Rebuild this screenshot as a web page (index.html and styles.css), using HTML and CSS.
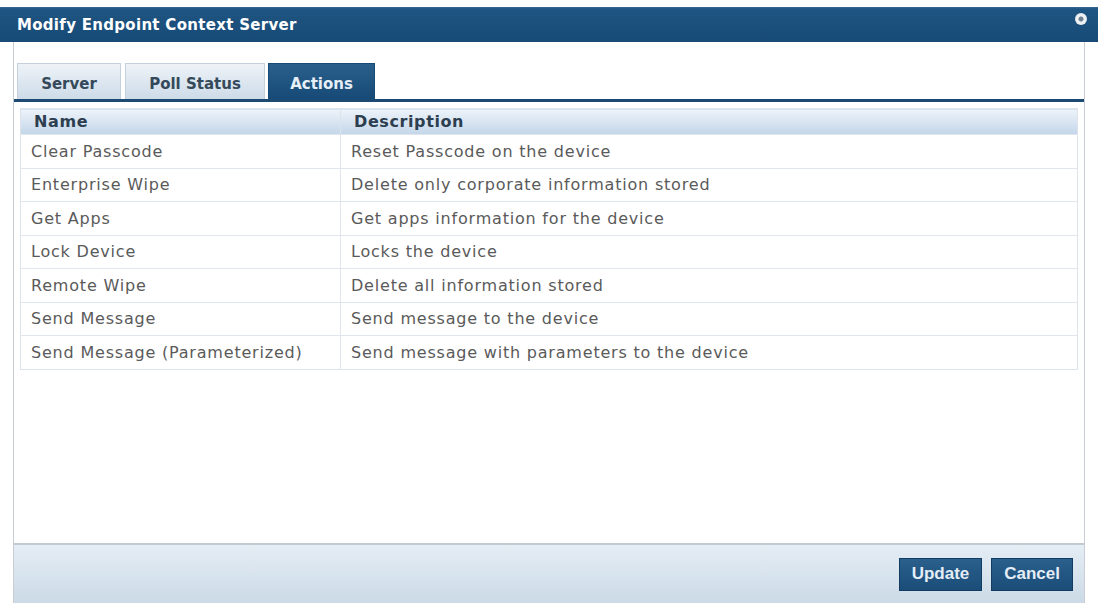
FILE: index.html
```html
<!DOCTYPE html>
<html lang="en">
<head>
  <meta charset="UTF-8" />
  <title>Modify Endpoint Context Server</title>
  <link rel="stylesheet" href="styles.css">
</head>
<body>

<div class="dialog">
  <!-- Barre de titre -->
  <div class="titlebar">
    <span class="title">Modify Endpoint Context Server</span>
    <span class="close-btn"></span>
  </div>

  <div class="content">
    <!-- Onglets -->
    <div class="tabs">
      <div class="tab tab-server">Server</div>
      <div class="tab tab-poll">Poll Status</div>
      <div class="tab tab-actions active">Actions</div>
    </div>

    <div class="panel">
      <table class="actions-table">
        <thead>
          <tr>
            <th class="col-name">Name</th>
            <th>Description</th>
          </tr>
        </thead>
        <tbody>
          <tr><td>Clear Passcode</td><td>Reset Passcode on the device</td></tr>
          <tr><td>Enterprise Wipe</td><td>Delete only corporate information stored</td></tr>
          <tr><td>Get Apps</td><td>Get apps information for the device</td></tr>
          <tr><td>Lock Device</td><td>Locks the device</td></tr>
          <tr><td>Remote Wipe</td><td>Delete all information stored</td></tr>
          <tr><td>Send Message</td><td>Send message to the device</td></tr>
          <tr><td>Send Message (Parameterized)</td><td>Send message with parameters to the device</td></tr>
        </tbody>
      </table>
    </div>

    <!-- Pied de page -->
    <div class="footer">
      <button class="btn">Update</button>
      <button class="btn">Cancel</button>
    </div>
  </div>
</div>

</body>
</html>
```

FILE: styles.css
```css
/* Styles de base */
body {
  margin: 0;
  background: #ffffff;
  font-family: 'DejaVu Sans', Verdana, sans-serif;
  color: #555;
}

.dialog {
  padding-top: 7px;
  height: 596px;
  display: flex;
  flex-direction: column;
}

.titlebar {
  height: 35px;
  background: linear-gradient(to bottom, #3a6a94 0px, #1f5582 2px, #174a76 100%);
  display: flex;
  align-items: center;
  justify-content: space-between;
  padding: 0 11px 0 17px;
  box-sizing: border-box;
}

.title {
  color: #ffffff;
  font-weight: bold;
  font-size: 15px;
  letter-spacing: 0.3px;
  margin-top: 1px;
}

.close-btn {
  width: 12px;
  height: 12px;
  border-radius: 50%;
  background: radial-gradient(circle, #6d7f90 0, #6d7f90 2px, #f2f4f6 3px, #dfe4e9 100%);
  margin-top: -11px;
}

.content {
  flex: 1;
  margin: 0 13px;
  border-left: 1px solid #c9ced5;
  border-right: 1px solid #c9ced5;
  display: flex;
  flex-direction: column;
  padding-top: 21px;
}

.tabs {
  display: flex;
  padding-left: 3px;
  height: 36px;
  border-bottom: 3px solid #1d4a72;
}

.tab {
  display: flex;
  align-items: center;
  justify-content: center;
  font-size: 15px;
  font-weight: bold;
  color: #34495a;
  background: linear-gradient(to bottom, #eef3f8, #cddbe8);
  border: 1px solid #c4d0dc;
  border-bottom: none;
  box-sizing: border-box;
  padding-top: 4px;
}

.tab-server { width: 104px; }
.tab-poll { width: 140px; margin-left: 4px; }
.tab-actions { width: 107px; margin-left: 3px; }

.tab.active {
  background: linear-gradient(to bottom, #2a5f8c, #174a76);
  border-color: #174a76;
  color: #e6eef6;
}

.panel {
  flex: 1;
  padding: 6px 6px 0 6px;
}

.actions-table {
  width: 100%;
  border-collapse: collapse;
  border: 1px solid #dde3ea;
  font-size: 16px;
  letter-spacing: 0.8px;
}

.actions-table th {
  height: 25px;
  text-align: left;
  font-weight: bold;
  letter-spacing: 0.6px;
  color: #2c3e50;
  background: linear-gradient(to bottom, #edf3f9, #c3d6e9);
  padding: 0 0 0 13px;
  border-left: 1px solid #dbe3ec;
}

.actions-table th.col-name {
  width: 306px;
  border-left: none;
}

.actions-table td {
  height: 32.5px;
  padding: 0 0 0 10px;
  border-top: 1px solid #e1e6ec;
  border-left: 1px solid #e1e6ec;
  color: #5a5a5a;
}

.actions-table td:first-child {
  border-left: none;
}

.footer {
  height: 58px;
  border-top: 2px solid #c2c9d2;
  background: linear-gradient(to bottom, #e5edf5, #cbdae6);
  display: flex;
  justify-content: flex-end;
  align-items: center;
  gap: 9px;
  padding-right: 11px;
}

.btn {
  height: 33px;
  padding: 0 12px;
  border: 1px solid #123c61;
  background: linear-gradient(to bottom, #2b5f8c, #1a4d78);
  color: #e4edf6;
  font-family: 'Liberation Sans', Arial, sans-serif;
  font-weight: bold;
  font-size: 17px;
  cursor: pointer;
}
```
